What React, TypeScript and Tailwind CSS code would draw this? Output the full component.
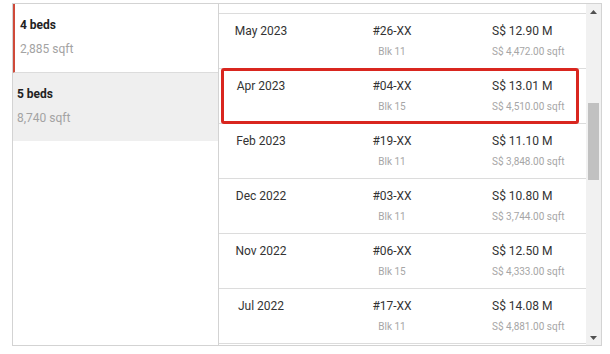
import React from "react";

const rows = [
  { date: "May 2023", unit: "#26-XX", blk: "Blk 11", price: "S$ 12.90 M", psf: "S$ 4,472.00 sqft" },
  { date: "Apr 2023", unit: "#04-XX", blk: "Blk 15", price: "S$ 13.01 M", psf: "S$ 4,510.00 sqft", hl: true },
  { date: "Feb 2023", unit: "#19-XX", blk: "Blk 11", price: "S$ 11.10 M", psf: "S$ 3,848.00 sqft" },
  { date: "Dec 2022", unit: "#03-XX", blk: "Blk 11", price: "S$ 10.80 M", psf: "S$ 3,744.00 sqft" },
  { date: "Nov 2022", unit: "#06-XX", blk: "Blk 15", price: "S$ 12.50 M", psf: "S$ 4,333.00 sqft" },
  { date: "Jul 2022", unit: "#17-XX", blk: "Blk 11", price: "S$ 14.08 M", psf: "S$ 4,881.00 sqft" },
];

export default function App() {
  return (
    <div className="w-[610px] h-[354px] bg-white pt-[3px] pl-[12px]" style={{ fontFamily: "Roboto, 'Noto Sans', sans-serif" }}>
      <div className="w-[590px] h-[343px] border border-[#d3d3d3] flex overflow-hidden">
        {/* Left panel */}
        <div className="w-[206px] border-r border-[#d3d3d3] flex flex-col shrink-0">
          <div className="h-[69px] border-b border-[#dcdcdc] border-l-[3px] border-l-[#cf4a3a] -ml-px pl-[5px] pt-[13px] bg-white">
            <div className="text-[12px] leading-[16px] font-bold text-[#222]">4 beds</div>
            <div className="mt-[8px] text-[12px] leading-[16px] text-[#a3a3a3]">2,885 sqft</div>
          </div>
          <div className="h-[68px] bg-[#efefef] pl-[4px] pt-[13px]">
            <div className="text-[12px] leading-[16px] font-bold text-[#222]">5 beds</div>
            <div className="mt-[8px] text-[12px] leading-[16px] text-[#a3a3a3]">8,740 sqft</div>
          </div>
        </div>
        {/* Right panel */}
        <div className="flex-1 flex min-w-0">
          <div className="w-[367px] flex flex-col overflow-hidden">
            <div className="h-[10px] shrink-0 border-b border-[#dcdcdc]" />
            {rows.map((r) => (
              <div key={r.date} className="relative h-[55px] shrink-0 border-b border-[#dcdcdc] grid grid-cols-[84px_178px_1fr] pt-[9px]">
                <div className="text-center">
                  <div className="text-[12px] leading-[16px] text-[#333]">{r.date}</div>
                </div>
                <div className="text-center">
                  <div className="text-[12px] leading-[16px] text-[#333]">{r.unit}</div>
                  <div className="mt-[6px] text-[10px] leading-[14px] text-[#a6a6a6]">{r.blk}</div>
                </div>
                <div className="pl-[11px]">
                  <div className="text-[12px] leading-[16px] text-[#333]">{r.price}</div>
                  <div className="mt-[6px] text-[10px] leading-[14px] text-[#a6a6a6]">{r.psf}</div>
                </div>
                {r.hl && (
                  <div className="absolute left-[2px] right-[7px] top-[-1px] bottom-[-1px] border-[3px] border-[#d9261f] rounded-[3px] pointer-events-none" />
                )}
              </div>
            ))}
          </div>
          {/* Scrollbar */}
          <div className="w-[15px] bg-[#f1f1f1] flex flex-col shrink-0">
            <div className="h-[15px] flex items-center justify-center">
              <svg width="7" height="4" viewBox="0 0 7 4"><polygon points="3.5,0 7,4 0,4" fill="#505050" /></svg>
            </div>
            <div className="mt-[84px] ml-[2px] w-[11px] h-[77px] bg-[#c1c1c1]" />
            <div className="mt-auto h-[15px] flex items-center justify-center">
              <svg width="7" height="4" viewBox="0 0 7 4"><polygon points="0,0 7,0 3.5,4" fill="#505050" /></svg>
            </div>
          </div>
        </div>
      </div>
    </div>
  );
}
